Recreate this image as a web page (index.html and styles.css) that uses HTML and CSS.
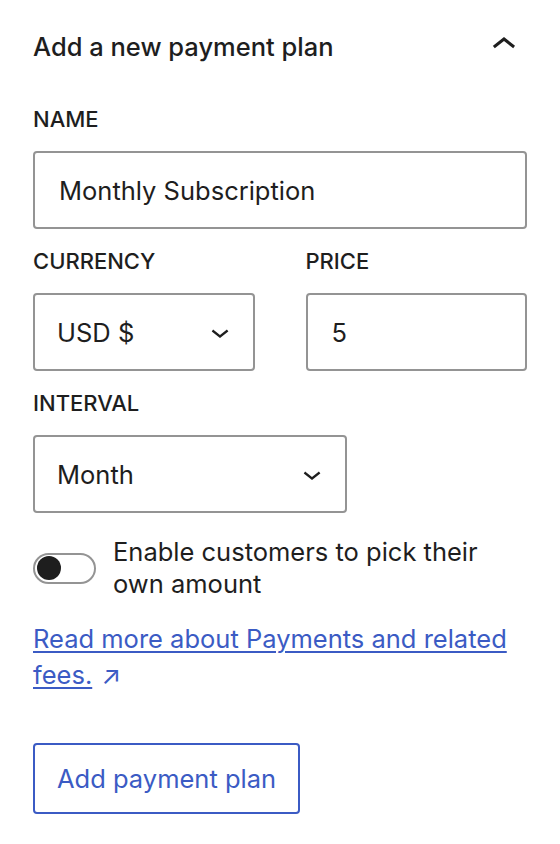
FILE: index.html
```html
<!DOCTYPE html>
<html lang="en">
<head>
    <meta charset="UTF-8">
    <meta name="viewport" content="width=device-width, initial-scale=1.0">
    <title>Add a new payment plan</title>
    <link rel="stylesheet" href="styles.css">
</head>
<body>
    <div class="panel">
        <div class="panel-header">
            <h2>Add a new payment plan</h2>
            <button class="panel-toggle" aria-label="Collapse">
                <svg viewBox="0 0 24 24" width="48" height="48"><path d="M6.5 12.4L12 8l5.5 4.4-.9 1.2L12 10l-4.6 3.6-1-1.2z"/></svg>
            </button>
        </div>

        <div class="panel-body">
            <div class="field">
                <label for="plan-name">Name</label>
                <input id="plan-name" class="text-input" type="text" value="Monthly Subscription">
            </div>

            <div class="field-row">
                <div class="field">
                    <label for="plan-currency">Currency</label>
                    <div class="select-box">
                        <select id="plan-currency">
                            <option>USD $</option>
                        </select>
                        <svg viewBox="0 0 24 24" width="36" height="36"><path d="M17.5 11.6L12 16l-5.5-4.4.9-1.2L12 14l4.6-3.6 1 1.2z"/></svg>
                    </div>
                </div>
                <div class="field">
                    <label for="plan-price">Price</label>
                    <input id="plan-price" class="text-input" type="text" value="5">
                </div>
            </div>

            <div class="field">
                <label for="plan-interval">Interval</label>
                <div class="select-box interval">
                    <select id="plan-interval">
                        <option>Month</option>
                    </select>
                    <svg viewBox="0 0 24 24" width="36" height="36"><path d="M17.5 11.6L12 16l-5.5-4.4.9-1.2L12 14l4.6-3.6 1 1.2z"/></svg>
                </div>
            </div>

            <div class="toggle-row">
                <span class="toggle"><span class="toggle-thumb"></span></span>
                <span class="toggle-label">Enable customers to pick their own amount</span>
            </div>

            <p class="help-link">
                <a href="#">Read more about Payments and related fees.</a><span class="external-icon">&#8599;</span>
            </p>

            <button class="add-plan-btn">Add payment plan</button>
        </div>
    </div>
</body>
</html>
```

FILE: styles.css
```css
body {
    margin: 0;
    background: #fff;
    color: #1e1e1e;
    font-family: Inter, "Noto Sans", sans-serif;
}
.panel {
    padding: 22px 33px 30px;
}
.panel-header {
    display: flex;
    align-items: center;
    justify-content: space-between;
    height: 48px;
}
.panel-header h2 {
    margin: 0;
    font-size: 25.5px;
    font-weight: 500;
}
.panel-toggle {
    border: none;
    background: none;
    padding: 0;
    width: 48px;
    height: 48px;
    margin: -3px -1px 0 0;
}
.panel-toggle svg,
.select-box svg {
    display: block;
    fill: #1e1e1e;
}
.panel-body {
    padding-top: 37px;
}
.field {
    margin-bottom: 20px;
}
.field label {
    display: block;
    font-size: 22px;
    line-height: 24px;
    font-weight: 500;
    text-transform: uppercase;
    margin-bottom: 20px;
}
.text-input {
    display: block;
    box-sizing: border-box;
    width: 100%;
    height: 78px;
    padding: 0 24px;
    border: 2px solid #949494;
    border-radius: 4px;
    font-family: inherit;
    font-size: 25.5px;
    color: #1e1e1e;
    background: #fff;
}
.field-row {
    display: grid;
    grid-template-columns: 1fr 1fr;
    gap: 51px;
}
.select-box {
    display: flex;
    align-items: center;
    box-sizing: border-box;
    height: 78px;
    padding-right: 15px;
    border: 2px solid #949494;
    border-radius: 4px;
}
.select-box.interval {
    width: 314px;
}
.select-box select {
    flex: 1;
    appearance: none;
    border: none;
    background: none;
    padding: 0 22px;
    font-family: inherit;
    font-size: 25.5px;
    color: #1e1e1e;
}
.toggle-row {
    display: flex;
    align-items: center;
    gap: 17px;
    padding-top: 3px;
}
.toggle {
    flex: none;
    display: flex;
    align-items: center;
    box-sizing: border-box;
    width: 63px;
    height: 31px;
    padding: 0 2px;
    border: 2px solid #949494;
    border-radius: 16px;
}
.toggle-thumb {
    width: 24px;
    height: 24px;
    border-radius: 50%;
    background: #1e1e1e;
}
.toggle-label {
    font-size: 25.5px;
    line-height: 32px;
}
.help-link {
    margin: 21px 0 50px;
    font-size: 25.5px;
    line-height: 36px;
    color: #3b5bc4;
}
.help-link a {
    color: #3b5bc4;
    text-decoration: underline;
    text-decoration-thickness: 2px;
    text-underline-offset: 3px;
}
.external-icon {
    margin-left: 9px;
}
.add-plan-btn {
    box-sizing: border-box;
    height: 71px;
    padding: 0 22px;
    border: 2px solid #3b5bc4;
    border-radius: 4px;
    background: #fff;
    color: #3b5bc4;
    font-family: inherit;
    font-size: 25.5px;
}
```
